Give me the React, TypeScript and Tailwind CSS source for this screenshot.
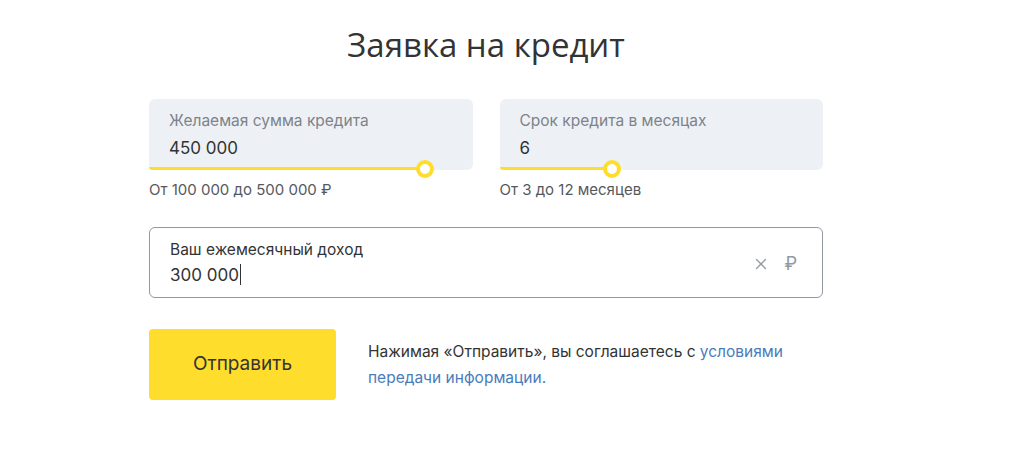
import { X } from "lucide-react";

const FONT = { fontFamily: "Inter, Roboto, 'Noto Sans', sans-serif" };

function SliderField({
  label,
  value,
  knob,
  hint,
}: {
  label: string;
  value: string;
  knob: string;
  hint: string;
}) {
  return (
    <div>
      <div className="relative h-[71px] rounded-[6px] bg-[#edf1f6]">
        <div className="px-5 pt-[12px]">
          <div className="text-[15.5px] leading-[20px] text-[#7d8389]">{label}</div>
          <div className="mt-[6px] text-[17px] leading-[22px] text-[#333]">{value}</div>
        </div>
        <div className={`absolute bottom-0 left-0 h-[3px] rounded-bl-[6px] bg-[#ffdd2d] ${knob === "a" ? "w-[276px]" : "w-[112px]"}`} />
        <div
          className={`absolute top-[61px] h-[18px] w-[18px] rounded-full border-[4px] border-[#ffdd2d] bg-white ${
            knob === "a" ? "left-[267px]" : "left-[103px]"
          }`}
        />
      </div>
      <div className="mt-[10px] text-[15px] leading-[20px] text-[#55595e]">{hint}</div>
    </div>
  );
}

export default function App() {
  return (
    <div className="min-h-screen bg-white" style={FONT}>
      <div className="ml-[149px] w-[674px] pt-[23px]">
        <h1
          className="text-center text-[33px] leading-[43px] text-[#333]"
          style={{ fontFamily: "'Open Sans', Inter, sans-serif" }}
        >
          Заявка на кредит
        </h1>

        <div className="mt-[33px] grid grid-cols-2 gap-[27px]">
          <SliderField
            label="Желаемая сумма кредита"
            value="450 000"
            knob="a"
            hint="От 100 000 до 500 000 ₽"
          />
          <SliderField
            label="Срок кредита в месяцах"
            value="6"
            knob="b"
            hint="От 3 до 12 месяцев"
          />
        </div>

        <div className="mt-[27px] flex h-[71px] items-center rounded-[6px] border border-[#9299a2] pl-5 pr-[25px]">
          <div className="flex-1">
            <div className="text-[15.5px] leading-[20px] text-[#333]">Ваш ежемесячный доход</div>
            <div className="mt-[4px] flex items-center text-[17px] leading-[22px] text-[#333]">
              300 000
              <span className="ml-[1px] inline-block h-[21px] w-px bg-[#333]" />
            </div>
          </div>
          <div className="flex items-center gap-[14px] pt-[2px] text-[#9299a2]">
            <X className="h-[18px] w-[18px]" strokeWidth={1.7} />
            <span className="text-[18px] leading-none">₽</span>
          </div>
        </div>

        <div className="mt-[31px] flex items-center gap-[32px]">
          <button className="flex h-[71px] w-[187px] items-center justify-center rounded-[4px] bg-[#ffdd2d] text-[19px] text-[#333]">
            Отправить
          </button>
          <p className="w-[422px] text-[15.5px] leading-[26px] text-[#333]">
            Нажимая «Отправить», вы соглашаетесь с{" "}
            <a className="text-[#4a7cbb]">условиями передачи информации.</a>
          </p>
        </div>
      </div>
    </div>
  );
}
